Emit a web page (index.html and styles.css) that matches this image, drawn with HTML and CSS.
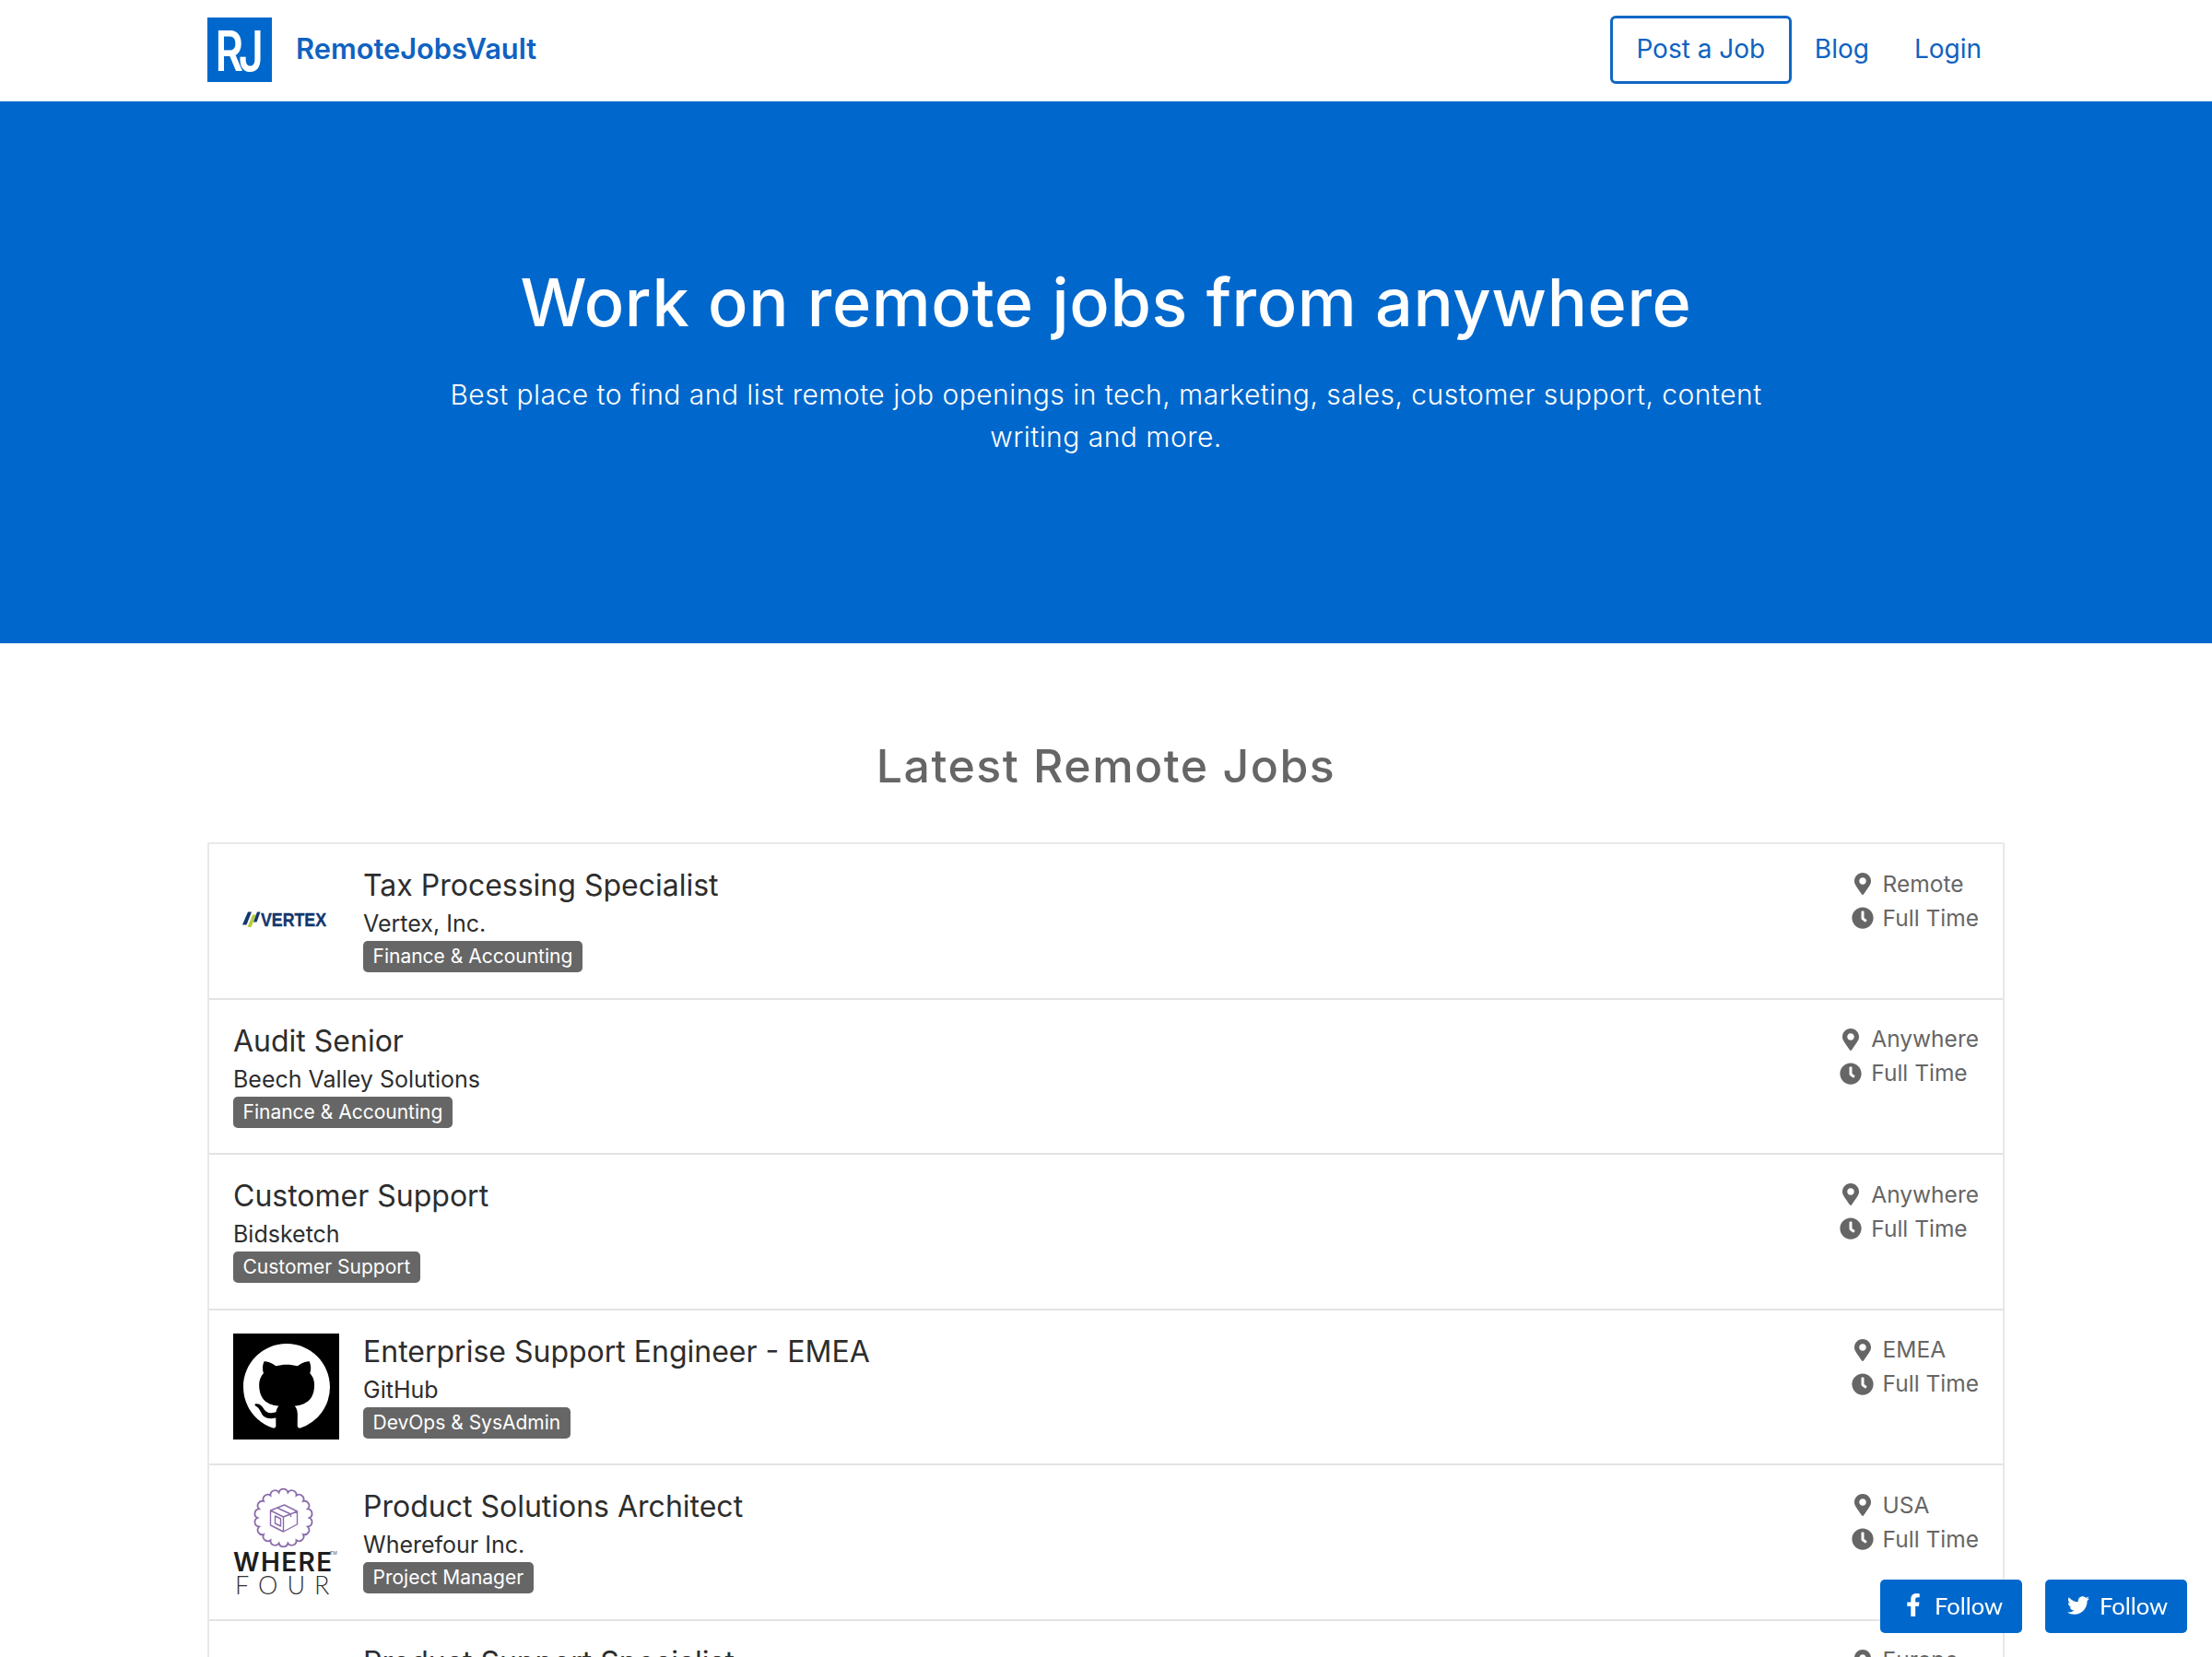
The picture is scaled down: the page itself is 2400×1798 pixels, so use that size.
FILE: index.html
```html
<!DOCTYPE html>
<html lang="en">
<head>
<meta charset="utf-8">
<title>RemoteJobsVault</title>
<link rel="stylesheet" href="styles.css">
</head>
<body>
<header class="topbar">
  <div class="container topbar-inner">
    <a class="brand" href="#"><span class="brand-mark"><span class="brand-letters">RJ</span></span><span class="brand-name">RemoteJobsVault</span></a>
    <nav class="nav">
      <a class="nav-btn" href="#">Post a Job</a>
      <a class="nav-link" href="#">Blog</a>
      <a class="nav-link" href="#">Login</a>
    </nav>
  </div>
</header>
<section class="hero">
  <h1 class="hero-title">Work on remote jobs from anywhere</h1>
  <p class="hero-sub">Best place to find and list remote job openings in tech, marketing, sales, customer support, content writing and more.</p>
</section>
<main class="container">
  <h2 class="section-title">Latest Remote Jobs</h2>
  <div class="jobs">

    <article class="job">
      <div class="job-logo">
        <svg viewBox="0 0 115 115" width="115" height="115">
          <path d="M10 61.500 L16 47.500 L20 47.500 L14.500 61.500Z" fill="#12366e"/>
          <path d="M15.500 64 L21 50.500 L25 50.500 L19.500 64Z" fill="#b5cc3a"/>
          <path d="M22 58.500 L26 47.500 L29.500 47.500 L25.500 58.500Z" fill="#12366e"/>
          <text x="30" y="63" textLength="71" lengthAdjust="spacingAndGlyphs" class="vertex-text">VERTEX</text>
        </svg>
      </div>
      <div class="job-main">
        <h3 class="job-title">Tax Processing Specialist</h3>
        <div class="job-company">Vertex, Inc.</div>
        <span class="tag">Finance &amp; Accounting</span>
      </div>
      <div class="job-meta">
        <div class="meta-line"><svg class="ic" viewBox="0 0 384 512"><use href="#pin"/></svg><span>Remote</span></div>
        <div class="meta-line"><svg class="ic" viewBox="0 0 512 512"><use href="#clock"/></svg><span>Full Time</span></div>
      </div>
    </article>

    <article class="job">
      <div class="job-main">
        <h3 class="job-title">Audit Senior</h3>
        <div class="job-company">Beech Valley Solutions</div>
        <span class="tag">Finance &amp; Accounting</span>
      </div>
      <div class="job-meta">
        <div class="meta-line"><svg class="ic" viewBox="0 0 384 512"><use href="#pin"/></svg><span>Anywhere</span></div>
        <div class="meta-line"><svg class="ic" viewBox="0 0 512 512"><use href="#clock"/></svg><span>Full Time</span></div>
      </div>
    </article>

    <article class="job">
      <div class="job-main">
        <h3 class="job-title">Customer Support</h3>
        <div class="job-company">Bidsketch</div>
        <span class="tag">Customer Support</span>
      </div>
      <div class="job-meta">
        <div class="meta-line"><svg class="ic" viewBox="0 0 384 512"><use href="#pin"/></svg><span>Anywhere</span></div>
        <div class="meta-line"><svg class="ic" viewBox="0 0 512 512"><use href="#clock"/></svg><span>Full Time</span></div>
      </div>
    </article>

    <article class="job">
      <div class="job-logo job-logo-black">
        <svg viewBox="0 0 16 16" width="94" height="94"><path fill="#fff" d="M8 0C3.58 0 0 3.58 0 8c0 3.54 2.29 6.53 5.47 7.59.4.07.55-.17.55-.38 0-.19-.01-.82-.01-1.49-2.01.37-2.53-.49-2.69-.94-.09-.23-.48-.94-.82-1.13-.28-.15-.68-.52-.01-.53.63-.01 1.08.58 1.23.82.72 1.21 1.87.87 2.33.66.07-.52.28-.87.51-1.07-1.78-.2-3.64-.89-3.64-3.95 0-.87.31-1.59.82-2.15-.08-.2-.36-1.02.08-2.12 0 0 .67-.21 2.2.82.64-.18 1.32-.27 2-.27.68 0 1.36.09 2 .27 1.53-1.04 2.2-.82 2.2-.82.44 1.1.16 1.92.08 2.12.51.56.82 1.27.82 2.15 0 3.07-1.87 3.75-3.65 3.95.29.25.54.73.54 1.48 0 1.07-.01 1.93-.01 2.2 0 .21.15.46.55.38A8.013 8.013 0 0016 8c0-4.42-3.58-8-8-8z"/></svg>
      </div>
      <div class="job-main">
        <h3 class="job-title">Enterprise Support Engineer - EMEA</h3>
        <div class="job-company">GitHub</div>
        <span class="tag">DevOps &amp; SysAdmin</span>
      </div>
      <div class="job-meta">
        <div class="meta-line"><svg class="ic" viewBox="0 0 384 512"><use href="#pin"/></svg><span>EMEA</span></div>
        <div class="meta-line"><svg class="ic" viewBox="0 0 512 512"><use href="#clock"/></svg><span>Full Time</span></div>
      </div>
    </article>

    <article class="job">
      <div class="job-logo">
        <svg viewBox="0 0 115 115" width="115" height="115">
          <g transform="translate(54.5 31)" fill="none" stroke="#8a6cab" stroke-width="1.8">
            <path d="M28 0A5 5 0 0 1 26.31 9.58A5 5 0 0 1 21.45 18A5 5 0 0 1 14 24.25A5 5 0 0 1 4.86 27.57A5 5 0 0 1 -4.86 27.57A5 5 0 0 1 -14 24.25A5 5 0 0 1 -21.45 18A5 5 0 0 1 -26.31 9.58A5 5 0 0 1 -28 0A5 5 0 0 1 -26.31 -9.58A5 5 0 0 1 -21.45 -18A5 5 0 0 1 -14 -24.25A5 5 0 0 1 -4.86 -27.57A5 5 0 0 1 4.86 -27.57A5 5 0 0 1 14 -24.25A5 5 0 0 1 21.45 -18A5 5 0 0 1 26.31 -9.58A5 5 0 0 1 28 0Z"/>
            <path stroke-width="1.4" stroke-linejoin="round" d="M-14 -8L1 -14L15 -7L15 7L0 15L-14 8ZM-14 -8L0 -1L15 -7M0 -1L0 15M-7 -11L8 -4L8 -1M-9 -2L-3 1L-3 9L-9 6Z"/>
          </g>
          <text x="0" y="89" class="where-text">WHERE</text>
          <text x="105" y="71" class="tm-text">TM</text>
          <text x="2" y="113.500" class="four-text">FOUR</text>
        </svg>
      </div>
      <div class="job-main">
        <h3 class="job-title">Product Solutions Architect</h3>
        <div class="job-company">Wherefour Inc.</div>
        <span class="tag">Project Manager</span>
      </div>
      <div class="job-meta">
        <div class="meta-line"><svg class="ic" viewBox="0 0 384 512"><use href="#pin"/></svg><span>USA</span></div>
        <div class="meta-line"><svg class="ic" viewBox="0 0 512 512"><use href="#clock"/></svg><span>Full Time</span></div>
      </div>
    </article>

    <article class="job">
      <div class="job-logo"></div>
      <div class="job-main">
        <h3 class="job-title">Product Support Specialist</h3>
        <div class="job-company">Wherefour Inc.</div>
        <span class="tag">Customer Support</span>
      </div>
      <div class="job-meta">
        <div class="meta-line"><svg class="ic" viewBox="0 0 384 512"><use href="#pin"/></svg><span>Europe</span></div>
        <div class="meta-line"><svg class="ic" viewBox="0 0 512 512"><use href="#clock"/></svg><span>Full Time</span></div>
      </div>
    </article>
  </div>
</main>

<div class="follow-bar">
  <a class="follow" href="#"><span class="follow-icon"><svg class="fb" viewBox="0 0 320 512"><path fill="#fff" d="M279.14 288l14.22-92.66h-88.91v-60.13c0-25.35 12.42-50.06 52.24-50.06h40.42V6.26S260.43 0 225.36 0c-73.22 0-121.08 44.38-121.08 124.72v70.62H22.89V288h81.39v224h100.17V288z"/></svg></span>Follow</a>
  <a class="follow" href="#"><span class="follow-icon"><svg class="tw" viewBox="0 0 512 512"><path fill="#fff" d="M459.37 151.716c.325 4.548.325 9.097.325 13.645 0 138.72-105.583 298.558-298.558 298.558-59.452 0-114.68-17.219-161.137-47.106 8.447.974 16.568 1.299 25.34 1.299 49.055 0 94.213-16.568 130.274-44.832-46.132-.975-84.792-31.188-98.112-72.772 6.498.974 12.995 1.624 19.818 1.624 9.421 0 18.843-1.3 27.614-3.573-48.081-9.747-84.143-51.98-84.143-102.985v-1.299c13.969 7.797 30.214 12.67 47.431 13.319-28.264-18.843-46.781-51.005-46.781-87.391 0-19.492 5.197-37.36 14.294-52.954 51.655 63.675 129.3 105.258 216.365 109.807-1.624-7.797-2.599-15.918-2.599-24.04 0-57.828 46.782-104.934 104.934-104.934 30.213 0 57.502 12.67 76.67 33.137 23.715-4.548 46.456-13.32 66.599-25.34-7.798 24.366-24.366 44.833-46.132 57.827 21.117-2.273 41.584-8.122 60.426-16.243-14.292 20.791-32.161 39.308-52.628 54.253z"/></svg></span>Follow</a>
</div>

<svg class="defs" width="0" height="0" aria-hidden="true">
  <defs>
    <path id="pin" d="M172.268 501.67C26.97 291.031 0 262.529 0 192 0 85.961 85.961 0 192 0s192 85.961 192 192c0 70.529-26.97 99.031-172.268 309.67-9.535 13.774-29.93 13.773-39.464 0zM192 272c44.183 0 80-35.817 80-80s-35.817-80-80-80-80 35.817-80 80 35.817 80 80 80z"/>
    <path id="clock" d="M256,8C119,8,8,119,8,256S119,504,256,504,504,393,504,256,393,8,256,8Zm92.49,313h0l-20,25a16,16,0,0,1-22.49,2.5h0l-67-49.72a40,40,0,0,1-15-31.23V112a16,16,0,0,1,16-16h32a16,16,0,0,1,16,16V256l58,42.5A16,16,0,0,1,348.49,321Z"/>
  </defs>
</svg>
</body>
</html>
```

FILE: styles.css
```css
* { box-sizing: border-box; }
html, body { margin: 0; padding: 0; height: 1798px; overflow: hidden; }
body { font-family: Inter, "Noto Sans", sans-serif; color: #2d2d2d; background: #fff; }
a { text-decoration: none; }
.defs { position: absolute; }
.container { width: 1950px; margin: 0 auto; }

.topbar { height: 110px; background: #fff; }
.topbar-inner { height: 110px; padding-bottom: 2px; display: flex; align-items: center; justify-content: space-between; }
.brand { display: flex; align-items: center; gap: 26px; }
.brand-mark { width: 70px; height: 70px; padding-top: 2px; background: #0068cc; color: #fff; display: flex; align-items: center; justify-content: center; }
.brand-letters { font-weight: 600; font-size: 60px; line-height: 68px; letter-spacing: -7px; transform: scaleX(.78); margin-left: -6px; }
.brand-name { color: #0f62c1; font-weight: 600; font-size: 30.8px; padding-bottom: 4px; }
.nav { display: flex; align-items: center; padding-right: 25px; }
.nav-btn { width: 197px; height: 74px; padding-bottom: 2px; border: 3px solid #0f67c6; border-radius: 6px; color: #0f62c1; font-size: 28px; display: flex; align-items: center; justify-content: center; margin-right: 25px; }
.nav-link { color: #0f62c1; font-size: 28px; margin-right: 49px; padding-bottom: 2px; }
.nav-link:last-child { margin-right: 0; }

.hero { height: 588px; background: #0068cc; color: #fff; display: flex; flex-direction: column; align-items: center; padding-top: 165px; }
.hero-title { margin: 0; font-weight: 500; font-size: 72px; line-height: 106px; letter-spacing: .6px; }
.hero-sub { margin: 24px 0 0; width: 1470px; text-align: center; font-weight: 300; font-size: 30px; line-height: 46px; letter-spacing: .48px; }

.section-title { margin: 104px 0 0; height: 112px; text-align: center; color: #666; font-weight: 500; font-size: 50px; line-height: 58px; letter-spacing: 1.5px; }
.jobs { border: 2px solid #e8e8e8; border-bottom: 0; border-radius: 2px; }
.job { height: 168.5px; display: flex; align-items: center; padding: 0 26px; gap: 26px; border-bottom: 2px solid #e3e3e3; }
.job-logo { flex: 0 0 115px; height: 115px; display: flex; align-items: center; justify-content: center; }
.job-logo svg { overflow: visible; }
.job-logo-black { background: #000; }
.job-main { flex: 1; min-width: 0; padding-bottom: 2.5px; display: flex; flex-direction: column; align-items: flex-start; }
.job-title { margin: 0; font-weight: 400; font-size: 32px; line-height: 40px; color: #2d2d2d; }
.job-company { margin-top: 2px; font-size: 25px; line-height: 38px; color: #2d2d2d; }
.tag { background: #666; color: #fff; font-size: 21px; line-height: 34px; height: 34px; padding: 0 10.5px; border-radius: 5px; }
.job-meta { align-self: flex-start; padding-top: 24.5px; color: #666; font-size: 24.5px; line-height: 37px; }
.meta-line { display: flex; align-items: center; }
.meta-line span { margin-left: 10px; }
.ic { width: 24px; height: 24px; fill: #666; flex: none; }

.follow-bar { position: fixed; right: 27px; bottom: 26px; display: flex; gap: 25px; }
.follow { width: 154px; height: 58px; padding: 0 0 3px 24px; background: #0068cc; color: #fff; border-radius: 5px; font-family: Lato, sans-serif; font-size: 25.5px; display: flex; align-items: center; gap: 11px; }
.follow-icon { width: 24px; display: flex; align-items: center; justify-content: center; }
.fb { width: 16px; height: 25px; }
.tw { width: 24px; height: 24px; }

.vertex-text { font-family: "Liberation Sans", sans-serif; font-weight: 700; font-size: 21px; fill: #12366e; stroke: #12366e; stroke-width: .4px; }
.where-text { font-family: Inter, sans-serif; font-weight: 600; font-size: 28px; letter-spacing: 1.4px; fill: #1d1d1d; }
.tm-text { font-family: Inter, sans-serif; font-size: 5px; fill: #555; }
.four-text { font-family: Lato, sans-serif; font-weight: 300; font-size: 27px; letter-spacing: 10px; fill: #333; }
```
